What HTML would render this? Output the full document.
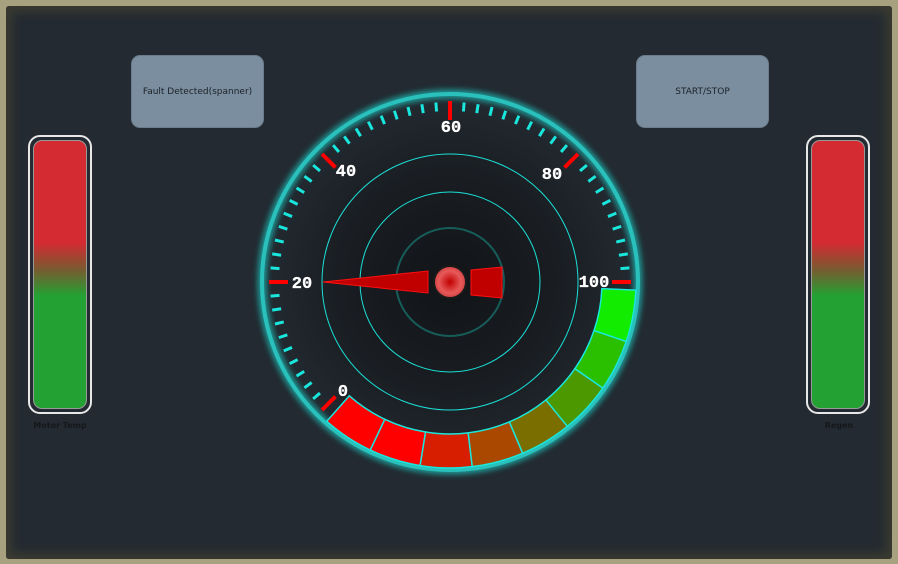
<!DOCTYPE html>
<html><head><meta charset="utf-8"><style>
html,body{margin:0;padding:0;width:898px;height:564px;overflow:hidden;background:#a39e7c;}
#frame{position:absolute;left:0;top:0;width:898px;height:564px;background:#a7a17f;}
#inner{position:absolute;left:6px;top:6px;width:886px;height:553px;background:#232a31;box-shadow:0 0 10px 6px #3a3b30 inset;border-radius:3px;}
.btn{position:absolute;width:131px;height:71px;background:#7a8e9f;border:1px solid #6b7d8c;border-radius:9px;font:9px "DejaVu Sans","Liberation Sans",sans-serif;color:#1d2127;display:flex;align-items:center;justify-content:center;}
.barf{position:absolute;width:60px;height:275px;border:2px solid #e8e8e8;border-radius:12px;}
.bar{position:absolute;left:3px;top:3px;width:52px;height:267px;border:1px solid #999;border-radius:9px;background:linear-gradient(#d42a31 0%,#d42a31 38%,#7a5a30 48%,#23a133 58%,#23a133 100%);}
.lbl{position:absolute;font:bold 8px "DejaVu Sans","Liberation Sans",sans-serif;color:#14181b;width:80px;text-align:center;}
svg{position:absolute;left:0;top:0;}
</style></head><body>
<div id="frame"></div>
<div id="inner"></div>
<div class="btn" style="left:131px;top:55px">Fault Detected(spanner)</div>
<div class="btn" style="left:636px;top:55px">START/STOP</div>
<div class="barf" style="left:28px;top:135px"><div class="bar"></div></div>
<div class="barf" style="left:806px;top:135px"><div class="bar"></div></div>
<div class="lbl" style="left:20px;top:421px">Motor Temp</div>
<div class="lbl" style="left:799px;top:421px">Regen</div>
<svg id="g" width="898" height="564" viewBox="0 0 898 564">
<defs>
<radialGradient id="bg" cx="450" cy="282" r="188" gradientUnits="userSpaceOnUse">
<stop offset="0" stop-color="#111417"/><stop offset="0.6" stop-color="#1a1e23"/><stop offset="1" stop-color="#232a31"/></radialGradient>
<radialGradient id="hub"><stop offset="0" stop-color="#c00000"/><stop offset="0.7" stop-color="#e85a5a"/><stop offset="1" stop-color="#d04040"/></radialGradient>
<filter id="glow" x="-20%" y="-20%" width="140%" height="140%"><feGaussianBlur stdDeviation="3"/></filter>
</defs>
<circle cx="450" cy="282" r="188" fill="url(#bg)"/>
<circle cx="450" cy="282" r="188" fill="none" stroke="#1fb5b0" stroke-width="9" filter="url(#glow)" opacity="0.8"/>
<circle cx="450" cy="282" r="188" fill="none" stroke="#2ac0bb" stroke-width="4"/>
<circle cx="450" cy="282" r="128" fill="none" stroke="#19e0d6" stroke-width="1"/>
<circle cx="450" cy="282" r="90" fill="none" stroke="#19e0d6" stroke-width="1"/>
<circle cx="450" cy="282" r="54" fill="none" stroke="#165d5a" stroke-width="2"/>
<g id="ticks"></g>
<g id="segs"></g>
<g font-family="'Liberation Mono',monospace" font-weight="bold" font-size="17" fill="#fff" text-anchor="middle" stroke="#fff" stroke-width="0.3">
<text x="451" y="132">60</text><text x="346" y="176">40</text><text x="552" y="179">80</text>
<text x="302" y="288">20</text><text x="594" y="287">100</text><text x="343" y="396">0</text>
</g>
<polygon points="323,282 428,271 428,293" fill="#c00000" stroke="#ff1010" stroke-width="1"/>
<polygon points="471,270 502,267 502,298 471,295" fill="#c00000" stroke="#ff1010" stroke-width="1"/>
<circle cx="450" cy="282" r="16" fill="url(#hub)" stroke="#1a1a1a" stroke-width="2"/>
</svg>
<script>
var cx=450,cy=282;
function P(r,a){a=a*Math.PI/180;return [cx+r*Math.cos(a),cy-r*Math.sin(a)];}
var t=document.getElementById("ticks"),h="";
for(var v=0;v<=100;v+=2){var a=225-v*2.25,maj=v%20==0;
var p1=P(maj?162:171,a),p2=P(maj?181:180,a);
h+='<line x1="'+p1[0]+'" y1="'+p1[1]+'" x2="'+p2[0]+'" y2="'+p2[1]+'" stroke="'+(maj?'#ff0000':'#19e6dc')+'" stroke-width="'+(maj?4:3)+'"/>';}
t.innerHTML=h;
var cols=["#ff0000","#ff0000","#d81e00","#aa4800","#7b6e00","#4c9800","#2ac000","#12ec00"];
var s="",ri=152,ro=186,st=-131.5,en=-2.5;
for(var i=0;i<8;i++){var a1=st+i*(en-st)/8,a2=st+(i+1)*(en-st)/8;
var A=P(ro,a1),B=P(ro,a2),C=P(ri,a2),D=P(ri,a1);
s+='<path d="M'+A+' A'+ro+' '+ro+' 0 0 0 '+B+' L'+C+' A'+ri+' '+ri+' 0 0 1 '+D+' Z" fill="'+cols[i]+'" stroke="#19e6dc" stroke-width="1.5"/>';}
document.getElementById("segs").innerHTML=s;
</script>
</body></html>
